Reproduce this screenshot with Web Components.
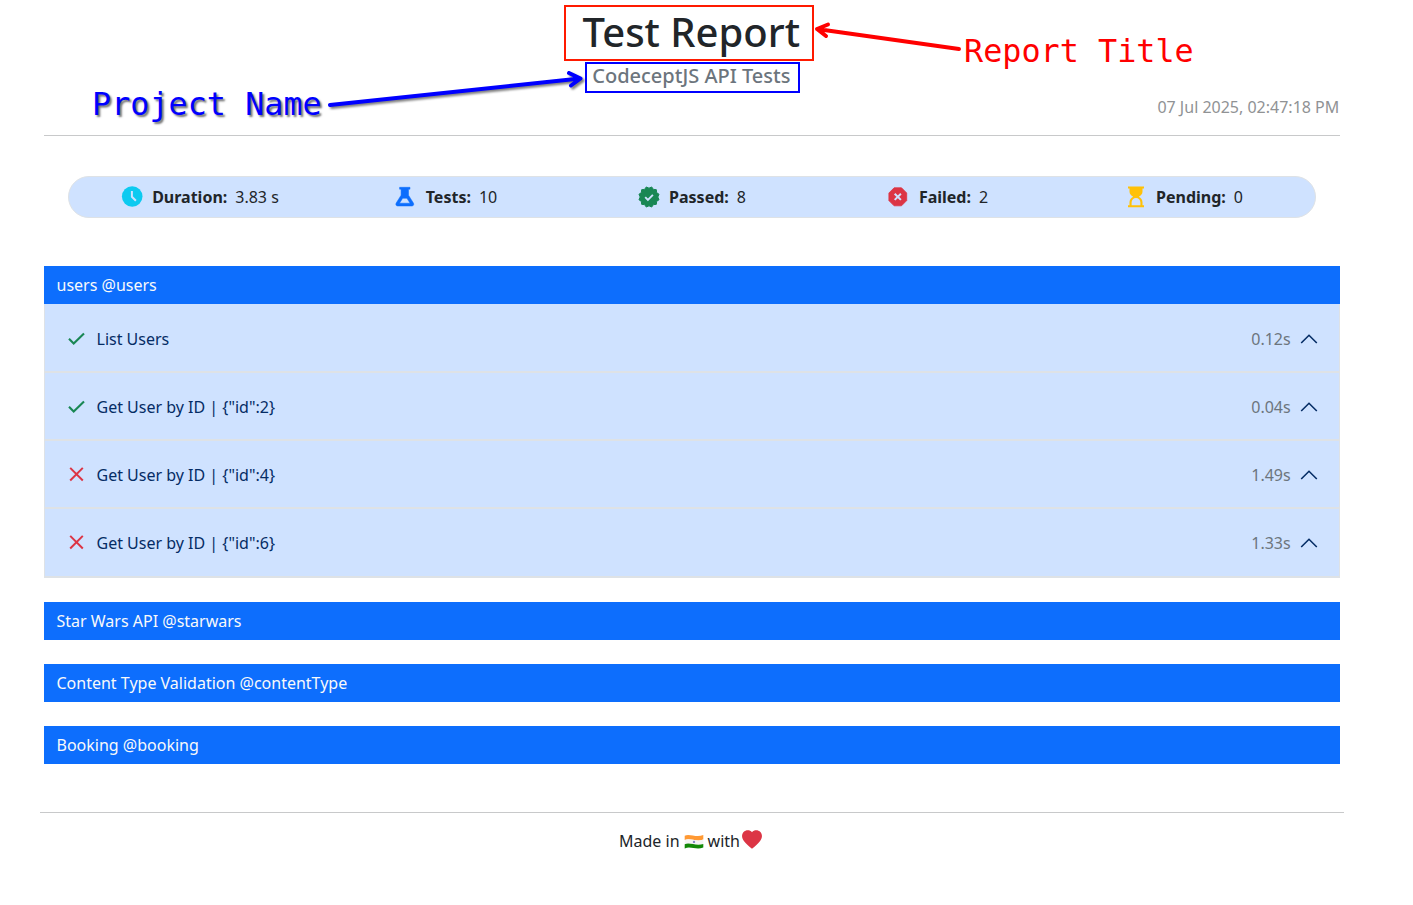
<!DOCTYPE html>
<html lang="en">
<head>
<meta charset="utf-8">
<title>Test Report</title>
<style>
body{margin:0;background:#fff;color:#212529;font:400 16px/24px "Noto Sans",sans-serif}
</style>
</head>
<body>
<test-report></test-report>
<script>
// Scalloped badge outline with twelve points
const badge = Array.from({length: 24}, (_, i) => {
  const r = i % 2 ? 8.8 : 10.4, a = (i + 1) * Math.PI / 12;
  return (11 + r * Math.sin(a)).toFixed(2) + ',' + (11 - r * Math.cos(a)).toFixed(2);
}).join(' ');
const ICONS = {
  clock: ['-.7 0 22 22', 22, '#0dcaf0', '<circle cx="10.5" cy="10.5" r="10.3" fill="currentColor"/><path d="M10.200 5v5.800l4 4" fill="none" stroke="#cfe2ff" stroke-width="2"/>'],
  flask: ['-.8 -.5 22 22', 22, '#0d6efd', '<path fill="currentColor" stroke="currentColor" stroke-width=".5" stroke-linejoin="round" fill-rule="evenodd" d="M4.800 .8h10.400v1.900h-1.500v6l4.900 7.800c.9 1.500.1 3-1.500 3H2.900c-1.600 0-2.400-1.500-1.500-3L6.300 8.700V2.700H4.800zM7.900 11.800L4.700 16.700h10.600L12.100 11.800z"/>'],
  patch: ['0 0 22 22', 22, '#198754', `<polygon fill="currentColor" stroke="currentColor" stroke-width="1" stroke-linejoin="round" points="${badge}"/><path d="M7.200 11.100l2.700 2.700 5-5" fill="none" stroke="#cfe2ff" stroke-width="1.900"/>`],
  octagon: ['-.8 -.8 22 22', 22, '#dc3545', '<path fill="currentColor" stroke="currentColor" stroke-width=".8" stroke-linejoin="round" d="M6.300 1h7.400l5.200 5.200v7.600l-5.200 5.200H6.300L1.100 13.800V6.200z"/><path d="M6.900 6.900l6.200 6.200M13.100 6.900l-6.200 6.200" stroke="#cfe2ff" stroke-width="2"/>'],
  hourglass: ['-1 .2 22 22', 22, '#ffc107', '<path fill="currentColor" fill-rule="evenodd" d="M2 .6h16v2h-1.500v3.200c0 2.500-1.500 4-3.700 5.200 2.200 1.200 3.700 3 3.700 5.500v3H18v2H2v-2h1.500v-3c0-2.500 1.500-4.300 3.700-5.500C5 9.800 3.500 8.300 3.500 5.800V2.600H2zM5.600 19.500h8.800v-2.700c0-2.600-1.900-4.600-4.400-4.600s-4.400 2-4.400 4.600z"/>'],
  check: ['0 0 17 17', 17, '#198754', '<path d="M1 8.800l4.700 4.700L16 3.500" fill="none" stroke="currentColor" stroke-width="2.100"/>'],
  cross: ['0 0 17 17', 17, '#dc3545', '<path d="M2.200 1.900l12.600 12.600M14.800 1.900L2.200 14.500" fill="none" stroke="currentColor" stroke-width="2"/>'],
  chevron: ['0 0 18 18', 18, '#052c65', '<path d="M1.200 13l7.800-7.700 7.800 7.700" fill="none" stroke="currentColor" stroke-width="1.600"/>'],
  heart: ['0 0 20 19', 20, '#dc3545', '<path fill="currentColor" d="M10 2.300C12-.5 15.700-.1 17.600 1.300c3.200 2.400 2.900 6.800.5 9.800C16.100 13.800 12.900 16.700 10 18.800 7.100 16.700 3.900 13.800 1.900 11.100-.5 8.100-.8 3.700 2.400 1.300 4.300-.1 8-.5 10 2.300z"/>'],
  flag: ['0 0 20 15', 20, '#000', '<path fill="#ff9933" d="M.7 1.800C5-1 12 4 19.300 1v4.600C12 8.400 6 3.500.7 6z"/><path fill="#f4f4f4" d="M.7 6C6 3.500 12 8.400 19.300 5.600V10C12 12.500 6 8 .7 10.200z"/><path fill="#128807" d="M.7 10.200C6 8 12 12.500 19.300 10v3.600C12 16.500 7 11.800.7 14.400z"/><circle cx="10" cy="7.900" r="1.200" fill="#8589c4"/>']
};
const define = (name, html) => customElements.define(name, class extends HTMLElement {
  connectedCallback() {
    if (this.shadowRoot) return;
    this.attachShadow({mode: 'open'}).innerHTML = typeof html === 'function' ? html(this) : html;
  }
});

define('ui-icon', el => {
  const [box, w, color, body] = ICONS[el.getAttribute('name')];
  return `<style>:host{display:inline-flex;flex:none;color:${color}}svg{display:block;width:${w}px}</style><svg viewBox="${box}">${body}</svg>`;
});

define('report-header', `<style>
:host{display:block;padding-top:8px;text-align:center;border-bottom:1px solid #c8c9ca;height:127px}
h1{font-size:40px;line-height:48px;font-weight:500;margin:0 1.400px 8px 0}
h2{font-size:20px;line-height:24px;font-weight:500;margin:0 1.400px 7px 0;color:#6c757d}
.date{text-align:right;margin-right:.7px;color:#909294}
</style><h1><slot name="title"></slot></h1><h2><slot name="project"></slot></h2><div class="date"><slot name="date"></slot></div>`);

define('summary-bar', `<style>
:host{display:grid;grid-template-columns:repeat(5,1fr);margin:40px 24px 48px;padding:0 8px;height:40px;border:1px solid #dee2e6;border-radius:21px;background:#cfe2ff}
</style><slot></slot>`);

define('summary-item', el => `<style>
:host{display:flex;align-items:center;justify-content:center}
ui-icon{width:22px;justify-content:center;margin:-1px 9.500px 0 -.5px}
b{font-weight:700;margin-right:8px}
</style><ui-icon name="${el.getAttribute('icon')}"></ui-icon><b>${el.getAttribute('label')}:</b><span><slot></slot></span>`);

define('test-suite', el => `<style>
:host{display:block;margin-bottom:24px}
header{background:#0d6efd;color:#f8f9fa;padding:7px 12.500px;height:24px}
.tests{display:block;background:#cfe2ff}
</style><header>${el.getAttribute('name')}</header><div class="tests"><slot></slot></div>`);

define('test-row', el => `<style>
:host{display:flex;align-items:flex-start;box-sizing:border-box;height:68px;padding:22px 21px 0 23px;color:#052c65;border:solid #dee2e6;border-width:0 1px 2px}
:host(:first-child){height:69px;padding-top:23px}
:host(:last-child){height:69px}
ui-icon{margin-top:3px}
.name{flex:1;margin-left:11.500px}
.time{color:#6c757d;margin-right:9.300px}
</style><ui-icon name="${el.getAttribute('status')}"></ui-icon><span class="name"><slot></slot></span><span class="time">${el.getAttribute('time')}</span><ui-icon name="chevron"></ui-icon>`);

define('report-footer', `<style>
:host{display:flex;justify-content:center;align-items:center;margin:48px -4px 0;border-top:1px solid #c8c9ca;padding:16px 3px 0 0;height:24px}
.flag{margin:1px 4px 0}
.heart{margin:-3px 0 0 2px}
</style><span>Made in</span><ui-icon class="flag" name="flag"></ui-icon><span>with</span><ui-icon class="heart" name="heart"></ui-icon>`);

define('callout-layer', `<style>
:host{position:absolute;left:0;top:0;width:1413px;height:140px;pointer-events:none}
.box{position:absolute;box-sizing:border-box;border:2px solid}
.t{left:564px;top:5px;width:250px;height:56px;border-color:#ff1a00}
.p{left:585px;top:62px;width:215px;height:31px;border-color:#00f}
.label{position:absolute;font:31.800px/40px "DejaVu Sans Mono",monospace;white-space:pre}
.rt{left:964px;top:31px;color:red}
.pn{left:92px;top:84px;color:#00f;text-shadow:2px 2px 2px rgba(0,0,0,.55)}
svg{position:absolute;left:0;top:0;fill:none;stroke-width:4;stroke-linecap:round;stroke-linejoin:round}
.blue{filter:drop-shadow(2px 2px 1px rgba(0,0,0,.5))}
</style>
<div class="box t"></div><div class="box p"></div>
<svg width="1413" height="140"><path stroke="red" d="M959 49L817 29M828 24.500L817 29l9 7"/><path class="blue" stroke="#00f" d="M330 105L580 78.500M569 73l11.500 5.500-9.500 7"/></svg>
<span class="label rt">Report Title</span><span class="label pn">Project Name</span>`);

define('test-report', `<style>:host{display:block;width:1296px;margin-left:44px}</style>
<report-header><span slot="title">Test Report</span><span slot="project">CodeceptJS API Tests</span><span slot="date">07 Jul 2025, 02:47:18 PM</span></report-header>
<summary-bar>
<summary-item icon="clock" label="Duration">3.83 s</summary-item>
<summary-item icon="flask" label="Tests">10</summary-item>
<summary-item icon="patch" label="Passed">8</summary-item>
<summary-item icon="octagon" label="Failed">2</summary-item>
<summary-item icon="hourglass" label="Pending">0</summary-item>
</summary-bar>
<test-suite name="users @users">
<test-row status="check" time="0.12s">List Users</test-row>
<test-row status="check" time="0.04s">Get User by ID | {"id":2}</test-row>
<test-row status="cross" time="1.49s">Get User by ID | {"id":4}</test-row>
<test-row status="cross" time="1.33s">Get User by ID | {"id":6}</test-row>
</test-suite>
<test-suite name="Star Wars API @starwars"></test-suite>
<test-suite name="Content Type Validation @contentType"></test-suite>
<test-suite name="Booking @booking"></test-suite>
<report-footer></report-footer>
<callout-layer></callout-layer>`);
</script>
</body>
</html>
